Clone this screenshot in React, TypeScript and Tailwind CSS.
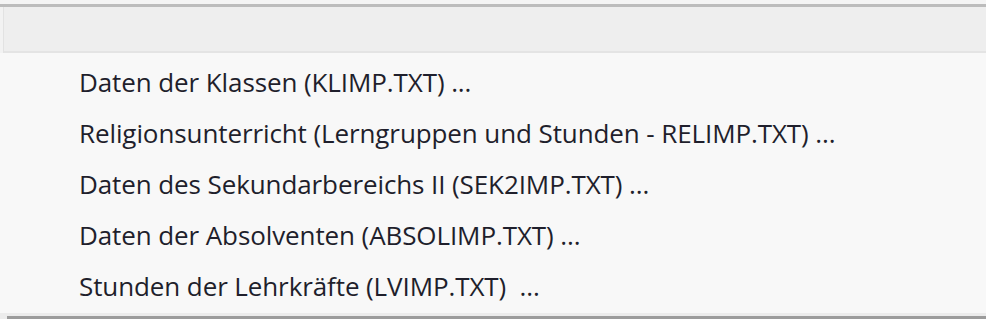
const items = [
  "Daten der Klassen (KLIMP.TXT) ...",
  "Religionsunterricht (Lerngruppen und Stunden - RELIMP.TXT) ...",
  "Daten des Sekundarbereichs II (SEK2IMP.TXT) ...",
  "Daten der Absolventen (ABSOLIMP.TXT) ...",
  "Stunden der Lehrkräfte (LVIMP.TXT)  ...",
];

export default function App() {
  return (
    <div className="w-[986px] h-[319px] bg-[#f7f7f7] flex flex-col overflow-hidden font-['Open_Sans',sans-serif]">
      <div className="h-[4px] shrink-0 bg-[#f4f4f4]" />
      <div className="h-[3px] shrink-0 bg-[#bcbcbc]" />
      <div className="h-[46px] shrink-0 flex">
        <div className="w-[4px] bg-[#f2f2f2] border-r border-[#e2e2e2]" />
        <div className="flex-1 bg-[#eeeeee] border-b-2 border-[#e4e4e4]" />
      </div>
      <div className="flex-1 min-h-0 overflow-hidden bg-[#f8f8f8] pl-[79px] pt-[12px] flex flex-col">
        {items.map((t) => (
          <div key={t} className="h-[51px] shrink-0 text-[26px] leading-[34px] text-[#1f1f2c] whitespace-pre tracking-[-0.1px]">
            {t}
          </div>
        ))}
      </div>
      <div className="h-[3px] shrink-0 bg-[#ececec]" />
      <div className="h-[3px] shrink-0 pl-[7px] bg-[#ececec]">
        <div className="h-full bg-[#9c9c9c]" />
      </div>
    </div>
  );
}
